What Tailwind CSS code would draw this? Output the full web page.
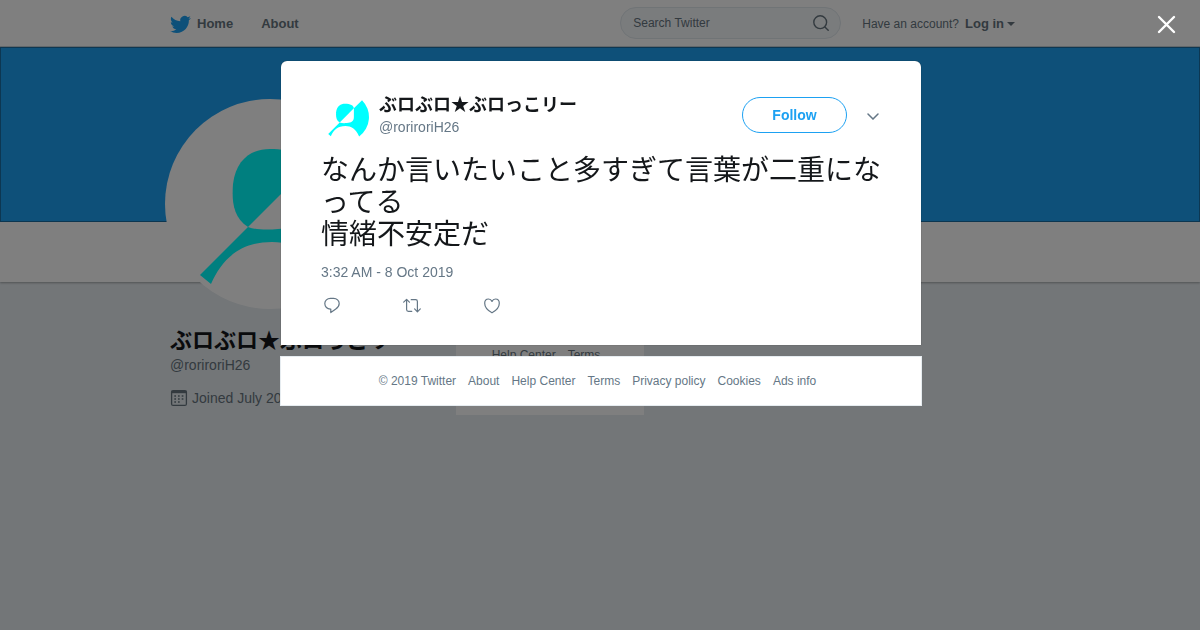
<!DOCTYPE html>
<html lang="ja">
<head>
<meta charset="utf-8">
<meta name="viewport" content="width=device-width, initial-scale=1">
<title>Twitter</title>
<script src="https://cdn.jsdelivr.net/npm/@tailwindcss/browser@4"></script>
</head>
<body class="min-h-screen overflow-hidden bg-[#e6ecf0] font-['Liberation_Sans','Noto_Sans_CJK_JP',sans-serif] text-sm text-[#14171a]">
<svg class="hidden" aria-hidden="true">
  <symbol id="avatar" viewBox="0 0 200 200">
    <path fill="#0ff" d="M78 123C62 113 62 95 63 80C66 55 82 45 100 45C122 45 136 52 137 64Z"/>
    <path fill="#0ff" d="M30 171L78 123C86 126 98 126 108 125C126 124 137 118 137 100V64L171 30A100 100 0 0 1 159 181C145 150 125 138 102 138C70 138 52 155 41 180Z"/>
  </symbol>
</svg>

<header class="border-b border-[#c5d0d7] bg-white">
  <div class="mx-auto flex h-[46px] max-w-[860px] items-center text-[#66757f]">
    <nav class="flex items-center gap-7 pt-0.5 text-[13px] font-bold">
      <a href="#" class="flex items-center gap-1.5">
        <svg class="size-[21px]" viewBox="0 0 24 24" fill="#1da1f2" aria-hidden="true"><path d="M23.95 4.57a10 10 0 0 1-2.82.77 4.96 4.96 0 0 0 2.16-2.72c-.95.55-2 .95-3.13 1.18a4.92 4.92 0 0 0-8.38 4.48C7.69 8.1 4.07 6.13 1.64 3.16a4.82 4.82 0 0 0-.67 2.48c0 1.71.87 3.21 2.19 4.1a4.9 4.9 0 0 1-2.23-.62v.06a4.92 4.92 0 0 0 3.95 4.83 5 5 0 0 1-2.21.08 4.94 4.94 0 0 0 4.6 3.42A9.87 9.87 0 0 1 0 19.54a13.99 13.99 0 0 0 7.56 2.21c9.05 0 14-7.5 14-13.98 0-.21 0-.42-.02-.63a9.94 9.94 0 0 0 2.46-2.55z"/></svg>
        <span>Home</span>
      </a>
      <a href="#">About</a>
    </nav>
    <form class="relative ml-auto w-[221px]">
      <input type="text" aria-label="Search Twitter" placeholder="Search Twitter" class="h-8 w-full rounded-full border border-[#e0e8ed] bg-[#f5f8fa] pr-9 pl-3 text-xs placeholder:text-[#66757f]">
      <button type="button" aria-label="Search" class="absolute top-2 right-3">
        <svg class="size-4" viewBox="0 0 16 16" fill="none" stroke="#66757f" stroke-width="1.4" stroke-linecap="round" aria-hidden="true"><circle cx="7.2" cy="7.2" r="6.4"/><path d="M11.9 11.9L15.2 15.2"/></svg>
      </button>
    </form>
    <div class="mr-[15px] ml-[21px] flex items-center gap-1.5 pt-0.5 text-xs">
      <span>Have an account?</span>
      <button type="button" class="flex items-center gap-[3px] text-[13px] font-bold">Log in
        <svg class="h-1 w-2" viewBox="0 0 8 4" fill="currentColor" aria-hidden="true"><path d="M0 0H8L4 4Z"/></svg>
      </button>
    </div>
  </div>
</header>

<div class="h-[175px] border border-[#1a6fa5] bg-[#1da1f2]"></div>
<div class="h-[60px] bg-white shadow-[0_1px_2px_rgba(0,0,0,0.3)]"></div>

<main class="mx-auto flex max-w-[860px] items-start">
  <div class="relative w-[286px] shrink-0 pt-[45px]">
    <div class="absolute -top-[183px] -left-[5px] size-[210px] rounded-full bg-white p-[5px]">
      <svg class="size-full" role="img" aria-label="Profile picture"><use href="#avatar"/></svg>
    </div>
    <h1 class="text-[22px] leading-7 font-bold whitespace-nowrap">ぶロぶロ★ぶロっこリー</h1>
    <p class="leading-5 text-[#66757f]">@roriroriH26</p>
    <p class="mt-[13px] flex items-center gap-1 text-[#66757f]">
      <svg class="size-[18px]" viewBox="0 0 18 18" fill="none" stroke="currentColor" aria-hidden="true"><rect x="1.6" y="1.6" width="14.8" height="14.8" rx="1.5" stroke-width="1.3"/><path d="M1.5 3H16.5" stroke-width="2.4"/><path d="M4.3 7H14M4.3 10H14M4.3 13H11" stroke-width="1.7" stroke-dasharray="1.7 2"/></svg>
      <span>Joined July 2018</span>
    </p>
  </div>
  <div class="mt-6 flex h-[109px] w-[188px] items-start justify-center gap-3 bg-white pt-[41px] pr-2 text-xs text-[#66757f]">
    <a href="#">Help Center</a><a href="#">Terms</a>
  </div>
</main>

<div class="fixed inset-0 flex flex-col items-center bg-black/50 pt-[61px] pl-0.5">
  <button type="button" aria-label="Close" class="absolute top-[15px] right-6">
    <svg class="size-[19px]" viewBox="0 0 19 19" fill="none" stroke="#fff" stroke-width="2.4" stroke-linecap="round" aria-hidden="true"><path d="M2 2L17 17M17 2L2 17"/></svg>
  </button>

  <article role="dialog" aria-label="Tweet" class="w-full max-w-[640px] rounded-t-md bg-white px-10 pt-8 pb-[30px] shadow-[0_0_1px_rgba(0,0,0,0.6)]">
    <div class="flex items-start">
      <svg class="size-12" role="img" aria-label="Profile picture"><use href="#avatar"/></svg>
      <div class="ml-2.5">
        <h2 class="text-lg leading-6 font-bold">ぶロぶロ★ぶロっこリー</h2>
        <p class="leading-5 text-[#657786]">@roriroriH26</p>
      </div>
      <button type="button" class="mt-1 ml-auto h-9 w-[105px] rounded-full border border-[#1da1f2] font-bold text-[#1da1f2]">Follow</button>
      <button type="button" aria-label="More" class="mt-5 mr-0.5 ml-5">
        <svg class="h-[7px] w-3" viewBox="0 0 12 7" fill="none" stroke="#657786" stroke-width="1.5" stroke-linecap="round" aria-hidden="true"><path d="M1 1L6 6L11 1"/></svg>
      </button>
    </div>
    <p class="mt-[14px] text-[28px] leading-8">なんか言いたいこと多すぎて言葉が二重になってる<br>情緒不安定だ</p>
    <p class="mt-[11px] leading-5 text-[#657786]">3:32 AM - 8 Oct 2019</p>
    <div class="mt-[15px] flex gap-[62px] pl-0.5 text-[#657786]">
      <button type="button" aria-label="Reply"><svg class="size-[18px]" viewBox="0 0 18 18" fill="none" stroke="currentColor" stroke-width="1.2" stroke-linejoin="round" aria-hidden="true"><path d="M7.4 1.4H10.6C13.8 1.4 16.2 3.7 16.2 6.6C16.2 9 14.9 10.7 12.8 12L7.8 15.6V12.1H7.4C4.2 12.1 1.8 9.6 1.8 6.6C1.8 3.7 4.2 1.4 7.4 1.4Z"/></svg></button>
      <button type="button" aria-label="Retweet"><svg class="size-[18px]" viewBox="0 0 18 18" fill="none" stroke="currentColor" stroke-width="1.2" stroke-linecap="round" stroke-linejoin="round" aria-hidden="true"><path d="M.7 5.2L3.6 2.3L6.4 5.2M3.6 2.5V12.5Q3.6 14.3 5.4 14.3H8.8M8.2 2.7H12.6Q14.4 2.7 14.4 4.5V14.6M11.6 11.9L14.4 14.8L17.3 11.9"/></svg></button>
      <button type="button" aria-label="Like"><svg class="size-[18px]" viewBox="0 0 18 18" fill="none" stroke="currentColor" stroke-width="1.2" stroke-linejoin="round" aria-hidden="true"><path d="M9 15.8C5.6 14 1.7 10.3 1.7 6.3C1.7 3.8 3.4 2 5.5 2C7 2 8.3 2.8 9 4.4C9.7 2.8 11 2 12.5 2C14.6 2 16.3 3.8 16.3 6.3C16.3 10.3 12.4 14 9 15.8Z"/></svg></button>
    </div>
  </article>

  <footer class="mt-[11px] flex h-[50px] w-full max-w-[642px] items-center justify-center gap-3 border border-[#e6ecf0] bg-white pr-[7px] text-xs text-[#657786]">
    <span>© 2019 Twitter</span>
    <a href="#">About</a><a href="#">Help Center</a><a href="#">Terms</a><a href="#">Privacy policy</a><a href="#">Cookies</a><a href="#">Ads info</a>
  </footer>
</div>
</body>
</html>
